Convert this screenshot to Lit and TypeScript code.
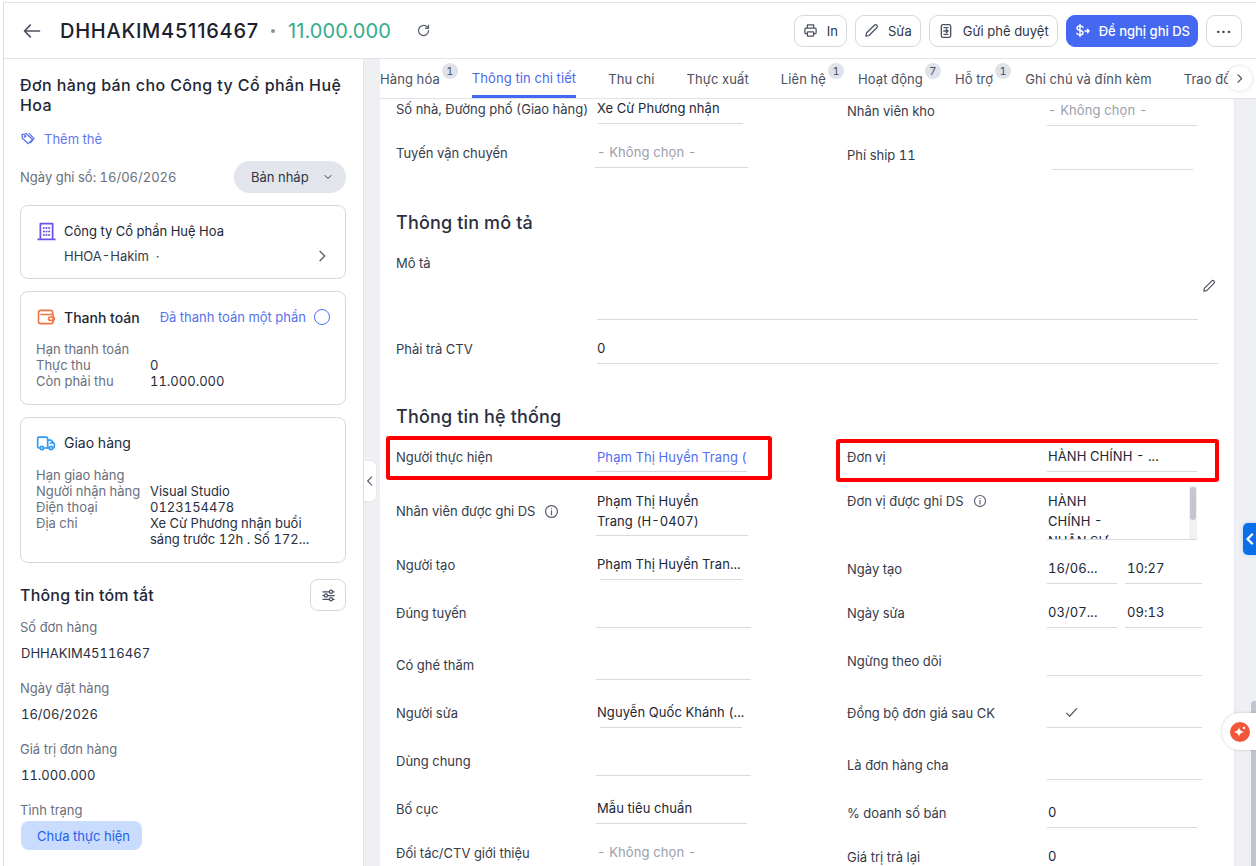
import { LitElement, html, css, svg } from "lit";
import { customElement } from "lit/decorators.js";

type F = { l: string; v?: any; h: number; dx?: number; w: number; pb?: number; cls?: string; box?: boolean; info?: boolean };

const ic = (d: any, size = 16, extra = "") => html`<svg class="ic ${extra}" width=${size} height=${size} viewBox="0 0 24 24" fill="none" stroke="currentColor" stroke-width="2" stroke-linecap="round" stroke-linejoin="round">${d}</svg>`;
const hy = html`<span class="hy">-</span>`;

const P = {
  back: svg`<path d="M21 12H3M10 5l-7 7 7 7"/>`,
  refresh: svg`<path d="M20 12a8 8 0 1 1-2.600-5.900L20 8.500M20 3.500v5h-5"/>`,
  print: svg`<path d="M7 8V3h10v5M7 17H5a2 2 0 0 1-2-2v-5a2 2 0 0 1 2-2h14a2 2 0 0 1 2 2v5a2 2 0 0 1-2 2h-2"/><rect x="7" y="14" width="10" height="7" rx="1"/>`,
  pen: svg`<path d="M16.500 3.500a2.800 2.800 0 0 1 4 4L8 20l-5 1 1-5z"/>`,
  doc: svg`<rect x="5" y="2.500" width="14" height="19" rx="2.500"/><path d="M9 7h6M8.500 12H15M12.500 9.500 15 12l-2.500 2.500M9 17h6"/>`,
  chevR: svg`<path d="M9 5l7 7-7 7"/>`,
  chevL: svg`<path d="M15 5l-7 7 7 7"/>`,
  chevD: svg`<path d="M6 9l6 6 6-6"/>`,
  tag: svg`<path d="M3 5.500 9.500 4l9 8.500-6 6.500L3.500 11z"/><path d="M14 4l7 7.500-5 6"/><circle cx="7.500" cy="8" r="1"/>`,
  building: svg`<path d="M5 21V3h14v18M2.500 21h19"/><path stroke-width="2.400" d="M9 8h.01M12 8h.01M15 8h.01M9 12h.01M12 12h.01M15 12h.01M9 16h.01M12 16h.01M15 16h.01"/>`,
  wallet: svg`<path d="M20 9V6.500A2.500 2.500 0 0 0 17.500 4H6a3 3 0 0 0-3 3v10a3 3 0 0 0 3 3h12a2.500 2.500 0 0 0 2.500-2.500V9H6"/><rect x="15" y="12" width="7" height="4" rx="2"/>`,
  truck: svg`<path d="M5 18H3.500A1.500 1.500 0 0 1 2 16.500v-10A1.500 1.500 0 0 1 3.500 5h9A1.500 1.500 0 0 1 14 6.500V18H9"/><path d="M14 8.500h4l4 4.500v3.500a1.500 1.500 0 0 1-1.500 1.500H20M16 18h-2M17 12h3"/><circle cx="7" cy="18" r="2"/><circle cx="18" cy="18" r="2"/>`,
  sliders: svg`<path d="M3 6h10M19 6h2M3 12h2M11 12h10M3 18h10M19 18h2"/><circle cx="16" cy="6" r="2.500"/><circle cx="8" cy="12" r="2.500"/><circle cx="16" cy="18" r="2.500"/>`,
  info: svg`<circle cx="12" cy="12" r="9.500"/><path d="M12 11v6M12 7.500h.01"/>`,
  check: svg`<path d="M4 13l5 5L20 6"/>`,
};

const topL: F[] = [
  { l: "Số nhà, Đường phố (Giao hàng)", v: "Xe Cừ Phương nhận", h: 25, dx: 1, w: 145 },
  { l: "Tuyến vận chuyển", v: "- Không chọn -", h: 44, dx: -2, w: 153, cls: "ph" },
];
const topR: F[] = [
  { l: "Nhân viên kho", v: "- Không chọn -", h: 27, dx: -1, w: 150, cls: "ph" },
  { l: "Phí ship 11", h: 44, dx: 4, w: 141 },
];
const sysL: F[] = [
  { l: "Người thực hiện", v: html`Phạm Thị Huyền Trang (H${hy}0407)`, h: 24, dx: -1, w: 151, cls: "link", box: true },
  { l: "Nhân viên được ghi DS", v: html`Phạm Thị Huyền<br>Trang (H${hy}0407)`, h: 64, dx: -1, w: 152, pb: 15, cls: "two", info: true },
  { l: "Người tạo", v: "Phạm Thị Huyền Tran...", h: 44, dx: 3, w: 142 },
  { l: "Đúng tuyến", h: 48, dx: -1, w: 155 },
  { l: "Có ghé thăm", h: 52, dx: -1, w: 155 },
  { l: "Người sửa", v: "Nguyễn Quốc Khánh (...", h: 48, dx: 3, w: 142 },
  { l: "Dùng chung", h: 48, dx: -1, w: 155 },
  { l: "Bố cục", v: "Mẫu tiêu chuẩn", h: 48, dx: -1, w: 151 },
  { l: "Đối tác/CTV giới thiệu", v: "- Không chọn -", h: 44, dx: -2, w: 153, cls: "ph" },
];

@customElement("app-root")
export class AppRoot extends LitElement {
  static styles = css`
    :host { display: block; width: 1256px; height: 866px; overflow: hidden; position: relative; background: #fff; font-family: Inter, "Noto Sans", sans-serif; font-size: 13px; color: #2f3546; font-variant-numeric: tabular-nums; }
    * { box-sizing: border-box; }
    .ic { flex: none; display: block; }
    .hy { vertical-align: 1px; line-height: 0; }
    .shell { margin: 2px 0 0 3px; height: 864px; border-top: 1px solid #e3e4e9; border-left: 1px solid #dcdde2; display: flex; flex-direction: column; }
    header { height: 56px; flex: none; display: flex; align-items: center; border-bottom: 1px solid #e3e4e9; padding: 0 14px 0 18px; font-variant-numeric: normal; }
    .back { color: #4b5162; margin-right: 18px; }
    .code { font-size: 20px; font-weight: 500; color: #1c2130; letter-spacing: .75px; }
    .dot { width: 4px; height: 4px; border-radius: 50%; background: #8d91a0; margin: 0 13px 0 12px; }
    .amt { font-size: 20px; color: #35ad8c; letter-spacing: .1px; }
    .ref { color: #5a6070; margin-left: 25px; }
    .spacer { flex: 1; }
    .btn { height: 32px; border: 1px solid #d6d8de; border-radius: 9px; display: flex; align-items: center; gap: 9px; padding: 0 8px; color: #2f3546; background: #fff; }
    .btn + .btn { margin-left: 8px; }
    .btn.pri { background: #4468f2; border-color: #4468f2; color: #fff; font-weight: 500; padding: 0 7px; }
    .btn .ic { color: #4b5162; }
    .btn.pri .ic { color: #fff; }
    .btn.more { width: 36px; padding: 0; justify-content: center; letter-spacing: 1px; font-weight: 700; }
    .body { flex: 1; display: flex; min-height: 0; }
    aside { width: 359px; flex: none; padding: 16px 17px 0 16px; overflow: hidden; }
    .ttl { font-size: 16px; font-weight: 500; line-height: 20px; color: #222736; letter-spacing: .39px; }
    .tagrow { display: flex; align-items: center; gap: 8px; color: #5f78ee; margin-top: 14px; height: 20px; }
    .daterow { display: flex; align-items: center; justify-content: space-between; margin-top: 12px; height: 32px; color: #6a6f7e; }
    .pill { width: 112px; height: 32px; border-radius: 16px; background: #e3e5ec; display: flex; align-items: center; gap: 13px; padding-left: 17px; color: #2f3546; }
    .card { border: 1px solid #d6d8de; border-radius: 8px; padding: 15px 15px 0; margin-top: 12px; }
    .c1 { height: 74px; }
    .c2 { height: 114px; }
    .c3 { height: 146px; }
    .chead { display: flex; align-items: center; height: 20px; gap: 8px; white-space: nowrap; }
    .icw { width: 20px; flex: none; display: flex; justify-content: center; }
    .purple { color: #6a55e8; }
    .orange { color: #f0764a; }
    .sky { color: #2c9cf5; }
    .chead .nm { color: #222736; }
    .chead .nm.b { font-size: 14px; font-weight: 500; }
    .chead .nm.g { font-size: 14px; padding-bottom: 2px; }
    .chead .st { margin-left: auto; color: #5472ee; }
    .ring { width: 16px; height: 16px; border: 1.500px solid #4f6ef0; border-radius: 50%; }
    .sub { display: flex; align-items: center; justify-content: space-between; margin: 5px 0 0 28px; height: 20px; color: #363b4b; }
    .sub .ic { color: #5a6070; }
    .kv { margin-top: 14px; display: grid; grid-template-columns: 114px 1fr; line-height: 16px; }
    .kv .k { color: #6a6f7e; }
    .kv .v { color: #2a2f3e; }
    .sum { display: flex; align-items: center; justify-content: space-between; margin-top: 16px; height: 32px; }
    .sum b { font-size: 16px; font-weight: 500; color: #222736; letter-spacing: .2px; }
    .sqbtn { width: 36px; height: 32px; border: 1px solid #d6d8de; border-radius: 8px; display: flex; align-items: center; justify-content: center; color: #4b5162; }
    .slab { color: #6a6f7e; height: 20px; line-height: 20px; }
    .sval { color: #2a2f3e; margin: 6px 0 0 1px; height: 20px; line-height: 20px; }
    .slab.first { margin-top: 6px; }
    .slab.s2 { margin-top: 15px; }
    .tinh { margin-top: 1px; margin-left: 1px; width: 121px; height: 29px; border-radius: 8px; background: #cadcfd; color: #1d62ec; display: flex; align-items: center; padding-left: 16px; }
    .gut { width: 17px; flex: none; background: #eff0f3; border-left: 1px solid #e3e4e9; position: relative; }
    .handle { position: absolute; left: 0; top: 402px; width: 12px; height: 40px; background: #fff; border-radius: 0 5px 5px 0; display: flex; align-items: center; justify-content: center; color: #5a6070; box-shadow: 0 0 2px rgba(0,0,0,.12); }
    .right { flex: 1; min-width: 0; display: flex; flex-direction: column; min-height: 0; }
    .tabs { height: 40px; flex: none; border-bottom: 1px solid #e0e1e7; position: relative; color: #4a5060; }
    .strip { width: 850px; height: 39px; display: flex; gap: 32px; overflow: hidden; }
    .tab { position: relative; height: 39px; line-height: 41px; white-space: nowrap; flex: none; letter-spacing: .1px; }
    .tab.on { color: #4a68ee; border-bottom: 3px solid #4468f2; line-height: 39px; }
    .bdg { position: absolute; right: -18px; top: 4px; width: 16px; height: 16px; border-radius: 50%; background: #e0e2ea; color: #4a5060; font-size: 11px; line-height: 16px; text-align: center; letter-spacing: 0; }
    .next { position: absolute; left: 847px; top: 7px; width: 25px; height: 25px; border-radius: 50%; background: #fff; box-shadow: 0 0 4px rgba(0,0,0,.15); display: flex; align-items: center; justify-content: center; color: #4a5060; }
    .under { flex: 1; min-height: 0; display: flex; }
    .form { width: 854px; flex: none; min-height: 0; overflow: hidden; padding-left: 16px; background: #fff; }
    .cols { display: grid; grid-template-columns: 451px 1fr; }
    .row { display: flex; align-items: flex-end; position: relative; }
    .lab { width: 201px; flex: none; padding-bottom: 5px; line-height: 20px; color: #363b4b; display: flex; align-items: center; gap: 9px; white-space: nowrap; }
    .lab .ic { color: #5a6070; }
    .val { flex: none; width: 154px; }
    .txt { line-height: 20px; padding-bottom: 5px; color: #222736; white-space: nowrap; overflow: hidden; letter-spacing: .07px; }
    .txt.ph { color: #9a9eac; letter-spacing: .12px; }
    .txt.link { color: #4f6ef0; width: 149px; padding-bottom: 4px; }
    .txt.two { white-space: normal; padding-bottom: 4px; }
    .ul { height: 1px; background: #d8dae0; }
    .box { position: absolute; border: 4px solid #f00; border-radius: 3px; pointer-events: none; }
    .box.a { left: -10px; top: -12px; width: 386px; height: 44px; }
    .box.b { left: -11px; top: -9px; width: 383px; height: 43px; }
    h3 { margin: 0; font-size: 18px; font-weight: 500; color: #2b3040; line-height: 24px; letter-spacing: .15px; }
    .h1 { margin-top: 41px; }
    .wide { position: relative; display: flex; align-items: flex-end; }
    .desc { height: 85px; }
    .desc .lab { align-self: flex-start; padding: 0; margin-top: 18px; }
    .pen { position: absolute; left: 806px; top: 44px; color: #4b5162; }
    .ctv { height: 44px; }
    .ctv .val { width: 621px; }
    .h2 { margin-top: 41px; margin-bottom: 19px; }
    .dbl { display: flex; gap: 8px; width: 155px; margin-left: -1px; }
    .dbl > div:first-child { width: 70px; flex: none; }
    .dbl > div:last-child { width: 77px; flex: none; }
    .dbl .txt { padding-left: 1px; }
    .dbl .t2 { padding-left: 2px; }
    .scrollv { height: 54px; width: 150px; margin-left: -1px; overflow: hidden; border-bottom: 1px solid #d8dae0; position: relative; }
    .scrollv .in { line-height: 20px; padding: 5px 0 0 1px; width: 66px; color: #222736; letter-spacing: .07px; }
    .sb { position: absolute; right: 0; top: 0; width: 8px; height: 100%; background: #f0f1f3; }
    .sb i { display: block; margin: 1px auto 0; width: 6px; height: 33px; border-radius: 3px; background: #c3c6cf; }
    .chk { display: block; margin: -3px 0 2px 16px; color: #5a6070; }
    .rail { flex: 1; background: #eff0f3; border-left: 1px solid #e8e9ed; position: relative; }
    .thumb { position: absolute; right: 0; top: 602px; width: 5px; height: 180px; background: #c0c4d0; border-radius: 3px 0 0 0; }
    .blue { position: absolute; right: 0; top: 523px; width: 13px; height: 32px; background: #0b6fe8; border-radius: 5px 0 0 5px; color: #fff; display: flex; align-items: center; padding-left: 2px; z-index: 2; box-shadow: 0 0 4px rgba(11,111,232,.25); }
    .ai { position: absolute; right: 0; top: 713px; width: 34px; height: 37px; background: #fff; border-radius: 18px 0 0 18px; box-shadow: 0 0 3px rgba(0,0,0,.2); display: flex; align-items: center; padding-left: 8px; z-index: 2; }
    .ai span { width: 20px; height: 20px; border-radius: 50%; background: #f2563a; display: flex; align-items: center; justify-content: center; flex: none; }
  `;

  field(f: F) {
    return html`<div class="row" style="height:${f.h}px">
      <div class="lab" style=${f.pb ? `padding-bottom:${f.pb}px` : ""}>${f.l}${f.info ? ic(P.info, 15) : ""}</div>
      <div class="val">
        <div class="txt ${f.cls ?? ""}">${f.v ?? html`&nbsp;`}</div>
        <div class="ul" style="margin-left:${f.dx ?? 0}px;width:${f.w}px"></div>
      </div>
      ${f.box ? html`<div class="box a"></div>` : ""}
    </div>`;
  }

  simple(l: string, v: any, h: number, dx: number, w: number, box = "") {
    return html`<div class="row" style="height:${h}px">
      <div class="lab">${l}</div>
      <div class="val">
        <div class="txt">${v ?? html`&nbsp;`}</div>
        <div class="ul" style="margin-left:${dx}px;width:${w}px"></div>
      </div>
      ${box ? html`<div class="box b"></div>` : ""}
    </div>`;
  }

  dateRow(l: string, d: string, t: string, h: number) {
    return html`<div class="row" style="height:${h}px">
      <div class="lab">${l}</div>
      <div class="dbl">
        <div><div class="txt">${d}</div><div class="ul"></div></div>
        <div><div class="txt t2">${t}</div><div class="ul"></div></div>
      </div>
    </div>`;
  }

  render() {
    const tabs: [string, string?][] = [["Hàng hóa", "1"], ["Thông tin chi tiết"], ["Thu chi"], ["Thực xuất"], ["Liên hệ", "1"], ["Hoạt động", "7"], ["Hỗ trợ", "1"], ["Ghi chú và đính kèm"], ["Trao đổi"]];
    return html`<div class="shell">
      <header>
        <span class="back">${ic(P.back, 20)}</span>
        <span class="code">DHHAKIM45116467</span><span class="dot"></span><span class="amt">11.000.000</span>
        <span class="ref">${ic(P.refresh, 15)}</span>
        <span class="spacer"></span>
        <div class="btn">${ic(P.print, 15)}In</div>
        <div class="btn">${ic(P.pen, 15)}Sửa</div>
        <div class="btn">${ic(P.doc, 16)}Gửi phê duyệt</div>
        <div class="btn pri">
          <svg class="ic" width="16" height="16" viewBox="0 0 16 16" fill="none" stroke="currentColor" stroke-width="1.400" stroke-linecap="round"><path d="M9 4.500C8.500 3.500 7.500 3 6 3 4.300 3 3 3.800 3 5.200 3 8 9 6.500 9 9.700 9 11.200 7.700 12 6 12c-1.600 0-2.700-.6-3.200-1.700M6 1.500v12"/><path d="M11 8h4M13.500 6.300 15 8l-1.500 1.700"/></svg>
          Đề nghị ghi DS
        </div>
        <div class="btn more">···</div>
      </header>
      <div class="body">
        <aside>
          <div class="ttl">Đơn hàng bán cho Công ty Cổ phần Huệ Hoa</div>
          <div class="tagrow">${ic(P.tag, 16)}Thêm thẻ</div>
          <div class="daterow"><span>Ngày ghi sổ: 16/06/2026</span><div class="pill">Bản nháp ${ic(P.chevD, 12)}</div></div>
          <div class="card c1">
            <div class="chead"><span class="icw purple">${ic(P.building, 21)}</span><span class="nm">Công ty Cổ phần Huệ Hoa</span></div>
            <div class="sub"><span>HHOA${hy}Hakim &nbsp;·</span>${ic(P.chevR, 16)}</div>
          </div>
          <div class="card c2">
            <div class="chead"><span class="icw orange">${ic(P.wallet, 20)}</span><span class="nm b">Thanh toán</span><span class="st">Đã thanh toán một phần</span><span class="ring"></span></div>
            <div class="kv"><span class="k">Hạn thanh toán</span><span class="v"></span><span class="k">Thực thu</span><span class="v">0</span><span class="k">Còn phải thu</span><span class="v">11.000.000</span></div>
          </div>
          <div class="card c3">
            <div class="chead"><span class="icw sky">${ic(P.truck, 20)}</span><span class="nm g">Giao hàng</span></div>
            <div class="kv"><span class="k">Hạn giao hàng</span><span class="v"></span><span class="k">Người nhận hàng</span><span class="v">Visual Studio</span><span class="k">Điện thoại</span><span class="v">0123154478</span><span class="k">Địa chỉ</span><span class="v">Xe Cừ Phương nhận buổi sáng trước 12h . Số 172...</span></div>
          </div>
          <div class="sum"><b>Thông tin tóm tắt</b><div class="sqbtn">${ic(P.sliders, 15)}</div></div>
          <div class="slab first">Số đơn hàng</div><div class="sval">DHHAKIM45116467</div>
          <div class="slab s2">Ngày đặt hàng</div><div class="sval">16/06/2026</div>
          <div class="slab s2">Giá trị đơn hàng</div><div class="sval">11.000.000</div>
          <div class="slab s2">Tình trạng</div><div class="tinh">Chưa thực hiện</div>
        </aside>
        <div class="gut"><div class="handle">${ic(P.chevL, 14)}</div></div>
        <div class="right">
          <div class="tabs">
            <div class="strip">
              ${tabs.map(([t, b], i) => html`<div class="tab ${i === 1 ? "on" : ""}">${t}${b ? html`<span class="bdg">${b}</span>` : ""}</div>`)}
            </div>
            <div class="next">${ic(P.chevR, 13)}</div>
          </div>
          <div class="under">
            <div class="form">
              <div class="cols">
                <div>${topL.map((f) => this.field(f))}</div>
                <div>${topR.map((f) => this.field(f))}</div>
              </div>
              <h3 class="h1">Thông tin mô tả</h3>
              <div class="wide desc"><div class="lab">Mô tả</div><div class="ul" style="width:601px"></div><span class="pen">${ic(P.pen, 14)}</span></div>
              <div class="wide ctv"><div class="lab">Phải trả CTV</div><div class="val"><div class="txt">0</div><div class="ul"></div></div></div>
              <h3 class="h2">Thông tin hệ thống</h3>
              <div class="cols">
                <div>${sysL.map((f) => this.field(f))}</div>
                <div>
                  ${this.simple("Đơn vị", html`HÀNH CHÍNH ${hy} ...`, 24, -1, 150, "b")}
                  <div class="row" style="height:68px">
                    <div class="lab" style="padding-bottom:29px">Đơn vị được ghi DS ${ic(P.info, 14)}</div>
                    <div class="scrollv"><div class="in">HÀNH CHÍNH ${hy} NHÂN SỰ</div><div class="sb"><i></i></div></div>
                  </div>
                  ${this.dateRow("Ngày tạo", "16/06...", "10:27", 44)}
                  ${this.dateRow("Ngày sửa", "03/07...", "09:13", 44)}
                  ${this.simple("Ngừng theo dõi", null, 48, -1, 155)}
                  ${this.simple("Đồng bộ đơn giá sau CK", html`<span class="chk">${ic(P.check, 15)}</span>`, 52, -1, 155)}
                  ${this.simple("Là đơn hàng cha", null, 52, -1, 155)}
                  ${this.simple("% doanh số bán", "0", 48, -1, 150)}
                  ${this.simple("Giá trị trả lại", "0", 44, -1, 150)}
                </div>
              </div>
            </div>
            <div class="rail"><div class="thumb"></div></div>
          </div>
        </div>
      </div>
    </div>
    <div class="blue"><svg class="ic" width="9" height="12" viewBox="0 0 9 12" fill="none" stroke="currentColor" stroke-width="2.400" stroke-linecap="round" stroke-linejoin="round"><path d="M7 1.500 2.500 6 7 10.500"/></svg></div>
    <div class="ai"><span><svg width="14" height="14" viewBox="0 0 14 14"><path fill="#fff" d="M6 2c.4 3 1.700 4.300 5 5-3.300.7-4.600 2-5 5-.4-3-1.700-4.300-5-5 3.300-.7 4.600-2 5-5z"/><circle cx="11" cy="3" r="1.200" fill="#fff"/></svg></span></div>`;
  }
}
